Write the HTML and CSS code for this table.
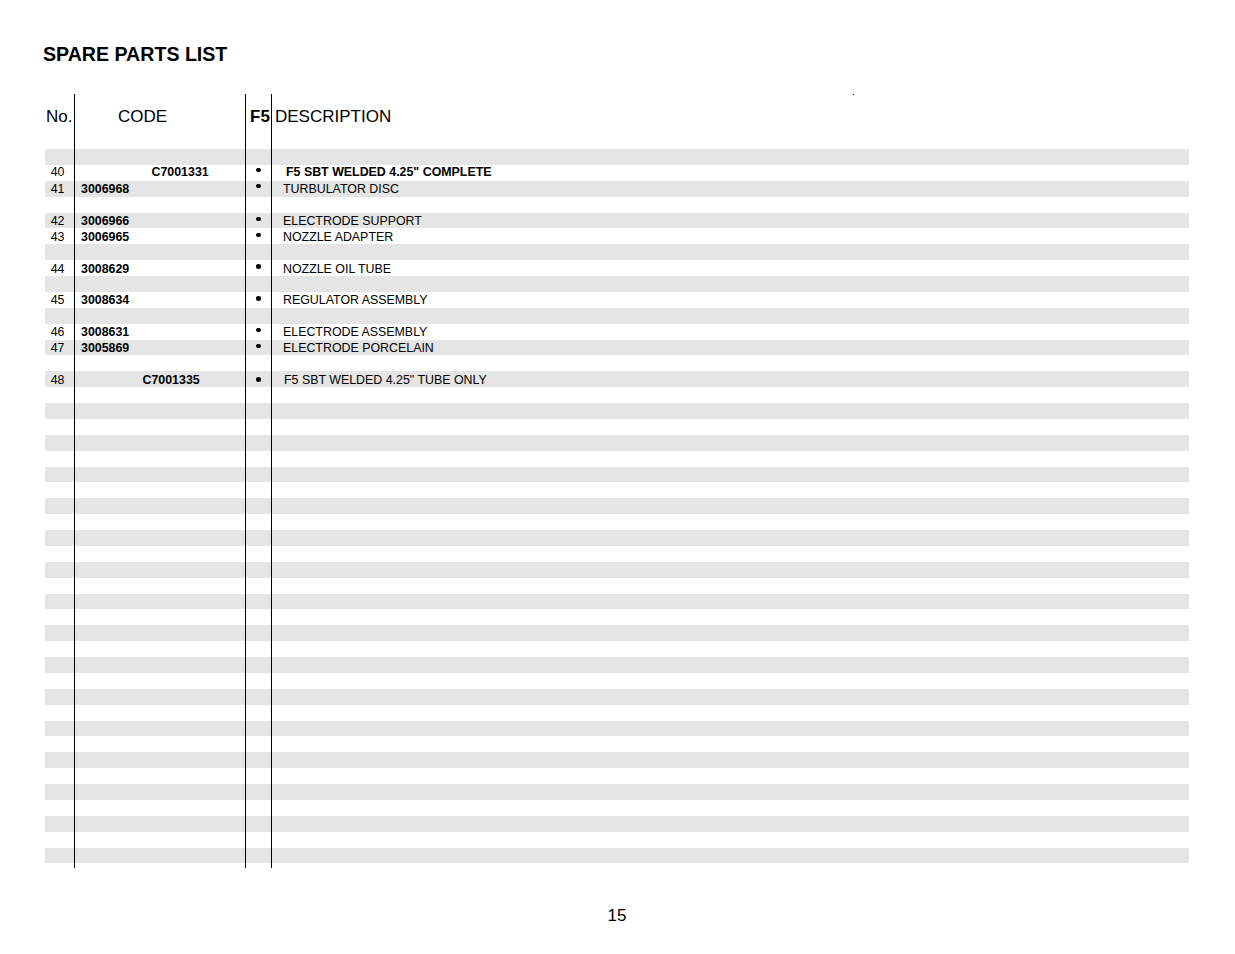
FILE: index.html
```html
<!DOCTYPE html>
<html lang="en">
<head>
<meta charset="utf-8">
<title>Spare Parts List</title>
<link rel="stylesheet" href="styles.css">
</head>
<body>
<div class="page">
  <h1 class="title">SPARE PARTS LIST</h1>
  <div class="table">
    <div class="row head">
      <div class="c no">No.</div>
      <div class="c code">CODE</div>
      <div class="c f5"><b>F5</b></div>
      <div class="c desc">DESCRIPTION<span class="speck"></span></div>
    </div>
    <div class="rows">
      <div class="row"><div class="c no"></div><div class="c code"></div><div class="c f5"></div><div class="c desc"></div></div>
      <div class="row r40"><div class="c no">40</div><div class="c code"><b class="ca">C7001331</b></div><div class="c f5"><span class="dot"></span></div><div class="c desc"><b class="da">F5 SBT WELDED 4.25" COMPLETE</b></div></div>
      <div class="row r41"><div class="c no">41</div><div class="c code"><b class="cn">3006968</b></div><div class="c f5"><span class="dot"></span></div><div class="c desc"><span class="dn">TURBULATOR DISC</span></div></div>
      <div class="row"><div class="c no"></div><div class="c code"></div><div class="c f5"></div><div class="c desc"></div></div>
      <div class="row"><div class="c no">42</div><div class="c code"><b class="cn">3006966</b></div><div class="c f5"><span class="dot"></span></div><div class="c desc"><span class="dn">ELECTRODE SUPPORT</span></div></div>
      <div class="row"><div class="c no">43</div><div class="c code"><b class="cn">3006965</b></div><div class="c f5"><span class="dot"></span></div><div class="c desc"><span class="dn">NOZZLE ADAPTER</span></div></div>
      <div class="row"><div class="c no"></div><div class="c code"></div><div class="c f5"></div><div class="c desc"></div></div>
      <div class="row"><div class="c no">44</div><div class="c code"><b class="cn">3008629</b></div><div class="c f5"><span class="dot"></span></div><div class="c desc"><span class="dn">NOZZLE OIL TUBE</span></div></div>
      <div class="row"><div class="c no"></div><div class="c code"></div><div class="c f5"></div><div class="c desc"></div></div>
      <div class="row"><div class="c no">45</div><div class="c code"><b class="cn">3008634</b></div><div class="c f5"><span class="dot"></span></div><div class="c desc"><span class="dn">REGULATOR ASSEMBLY</span></div></div>
      <div class="row"><div class="c no"></div><div class="c code"></div><div class="c f5"></div><div class="c desc"></div></div>
      <div class="row"><div class="c no">46</div><div class="c code"><b class="cn">3008631</b></div><div class="c f5"><span class="dot"></span></div><div class="c desc"><span class="dn">ELECTRODE ASSEMBLY</span></div></div>
      <div class="row"><div class="c no">47</div><div class="c code"><b class="cn">3005869</b></div><div class="c f5"><span class="dot"></span></div><div class="c desc"><span class="dn">ELECTRODE PORCELAIN</span></div></div>
      <div class="row"><div class="c no"></div><div class="c code"></div><div class="c f5"></div><div class="c desc"></div></div>
      <div class="row r48"><div class="c no">48</div><div class="c code"><b class="cb">C7001335</b></div><div class="c f5"><span class="dot"></span></div><div class="c desc"><span class="db">F5 SBT WELDED 4.25" TUBE ONLY</span></div></div>
      <div class="row"><div class="c no"></div><div class="c code"></div><div class="c f5"></div><div class="c desc"></div></div>
      <div class="row"><div class="c no"></div><div class="c code"></div><div class="c f5"></div><div class="c desc"></div></div>
      <div class="row"><div class="c no"></div><div class="c code"></div><div class="c f5"></div><div class="c desc"></div></div>
      <div class="row"><div class="c no"></div><div class="c code"></div><div class="c f5"></div><div class="c desc"></div></div>
      <div class="row"><div class="c no"></div><div class="c code"></div><div class="c f5"></div><div class="c desc"></div></div>
      <div class="row"><div class="c no"></div><div class="c code"></div><div class="c f5"></div><div class="c desc"></div></div>
      <div class="row"><div class="c no"></div><div class="c code"></div><div class="c f5"></div><div class="c desc"></div></div>
      <div class="row"><div class="c no"></div><div class="c code"></div><div class="c f5"></div><div class="c desc"></div></div>
      <div class="row"><div class="c no"></div><div class="c code"></div><div class="c f5"></div><div class="c desc"></div></div>
      <div class="row"><div class="c no"></div><div class="c code"></div><div class="c f5"></div><div class="c desc"></div></div>
      <div class="row"><div class="c no"></div><div class="c code"></div><div class="c f5"></div><div class="c desc"></div></div>
      <div class="row"><div class="c no"></div><div class="c code"></div><div class="c f5"></div><div class="c desc"></div></div>
      <div class="row"><div class="c no"></div><div class="c code"></div><div class="c f5"></div><div class="c desc"></div></div>
      <div class="row"><div class="c no"></div><div class="c code"></div><div class="c f5"></div><div class="c desc"></div></div>
      <div class="row"><div class="c no"></div><div class="c code"></div><div class="c f5"></div><div class="c desc"></div></div>
      <div class="row"><div class="c no"></div><div class="c code"></div><div class="c f5"></div><div class="c desc"></div></div>
      <div class="row"><div class="c no"></div><div class="c code"></div><div class="c f5"></div><div class="c desc"></div></div>
      <div class="row"><div class="c no"></div><div class="c code"></div><div class="c f5"></div><div class="c desc"></div></div>
      <div class="row"><div class="c no"></div><div class="c code"></div><div class="c f5"></div><div class="c desc"></div></div>
      <div class="row"><div class="c no"></div><div class="c code"></div><div class="c f5"></div><div class="c desc"></div></div>
      <div class="row"><div class="c no"></div><div class="c code"></div><div class="c f5"></div><div class="c desc"></div></div>
      <div class="row"><div class="c no"></div><div class="c code"></div><div class="c f5"></div><div class="c desc"></div></div>
      <div class="row"><div class="c no"></div><div class="c code"></div><div class="c f5"></div><div class="c desc"></div></div>
      <div class="row"><div class="c no"></div><div class="c code"></div><div class="c f5"></div><div class="c desc"></div></div>
      <div class="row"><div class="c no"></div><div class="c code"></div><div class="c f5"></div><div class="c desc"></div></div>
      <div class="row"><div class="c no"></div><div class="c code"></div><div class="c f5"></div><div class="c desc"></div></div>
      <div class="row"><div class="c no"></div><div class="c code"></div><div class="c f5"></div><div class="c desc"></div></div>
      <div class="row"><div class="c no"></div><div class="c code"></div><div class="c f5"></div><div class="c desc"></div></div>
      <div class="row"><div class="c no"></div><div class="c code"></div><div class="c f5"></div><div class="c desc"></div></div>
      <div class="row"><div class="c no"></div><div class="c code"></div><div class="c f5"></div><div class="c desc"></div></div>
    </div>
    <div class="row tail">
      <div class="c no"></div><div class="c code"></div><div class="c f5"></div><div class="c desc"></div>
    </div>
  </div>
  <div class="pagenum">15</div>
</div>
</body>
</html>
```
FILE: styles.css
```css
html, body {
  margin: 0;
  padding: 0;
  background: #ffffff;
}
body {
  font-family: "Liberation Sans", Arial, sans-serif;
  color: #000000;
}
.page {
  width: 1235px;
  padding: 43px 0 0 45px;
  box-sizing: border-box;
}
.title {
  margin: 0 0 0 -2px;
  font-size: 19.6px;
  line-height: 22px;
  font-weight: bold;
}
.table {
  margin-top: 29px;
  width: 1144px;
}
.row {
  display: grid;
  grid-template-columns: 29px 171px 26px 918px;
  height: 15.875px;
  font-size: 12.4px;
  line-height: 15.875px;
  white-space: nowrap;
}
.rows .row:nth-child(odd) {
  background: #e5e5e5;
}
.c {
  box-sizing: border-box;
  height: 100%;
}
.rows .no, .rows .code, .rows .desc {
  padding-top: 1.5px;
}
.rows .r40 .no, .rows .r40 .code, .rows .r40 .desc {
  padding-top: 0;
}
.code, .f5, .desc {
  border-left: 1px solid #000000;
}
.no {
  text-align: right;
  padding-right: 9.5px;
}
.code .cn { padding-left: 6px; }
.code .ca { padding-left: 76.5px; }
.code .cb { padding-left: 67.5px; }
.desc .dn { padding-left: 11px; }
.desc .da { padding-left: 14px; }
.desc .db { padding-left: 12px; }
.code b, .desc b, .desc span { display: inline-block; }
.f5 {
  display: flex;
  justify-content: center;
  align-items: flex-start;
  padding-top: 4.25px;
}
.rows .r40 .f5, .rows .r41 .f5 {
  padding-top: 3px;
}
.rows .r48 .f5 {
  padding-top: 6px;
}
.dot {
  display: block;
  width: 4.5px;
  height: 4.5px;
  border-radius: 50%;
  background: #000000;
}
.head {
  height: 55px;
  font-size: 17px;
  line-height: 20px;
}
.head .c {
  padding-top: 12.5px;
}
.head .no {
  text-align: left;
  padding-right: 0;
  padding-left: 1px;
}
.head .code { padding-left: 43px; }
.head .f5 {
  display: block;
  padding-left: 4px;
}
.head .desc {
  padding-left: 3px;
  position: relative;
}
.speck {
  position: absolute;
  left: 581px;
  top: 0;
  width: 1px;
  height: 1px;
  background: #000000;
}
.tail {
  height: 2.6px;
}
.pagenum {
  margin-top: 40px;
  width: 1144px;
  text-align: center;
  font-size: 17px;
  line-height: 20px;
}
```
